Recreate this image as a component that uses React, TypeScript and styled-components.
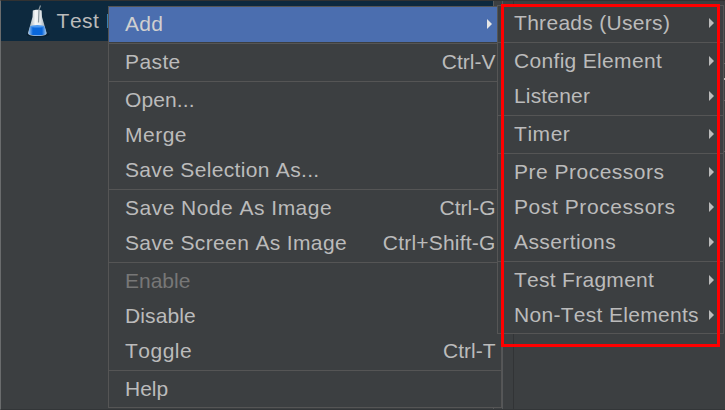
import React from "react";
import styled, { createGlobalStyle } from "styled-components";

type MenuItem = {
  label: string;
  shortcut?: string;
  submenu?: boolean;
  active?: boolean;
  disabled?: boolean;
  spacing?: number;
  shortcutSpacing?: number;
};

const contextMenu: MenuItem[][] = [
  [{ label: "Add", submenu: true, active: true, spacing: 0.3 }],
  [{ label: "Paste", shortcut: "Ctrl-V", spacing: 0.4 }],
  [
    { label: "Open...", spacing: 0.1 },
    { label: "Merge", spacing: 0.5 },
    { label: "Save Selection As...", spacing: 0.33 },
  ],
  [
    { label: "Save Node As Image", shortcut: "Ctrl-G", spacing: 0.48 },
    {
      label: "Save Screen As Image",
      shortcut: "Ctrl+Shift-G",
      spacing: 0.36,
      shortcutSpacing: 0.2,
    },
  ],
  [
    { label: "Enable", disabled: true, spacing: 0 },
    { label: "Disable", spacing: 0.1 },
    { label: "Toggle", shortcut: "Ctrl-T", spacing: 0.5 },
  ],
  [{ label: "Help", spacing: 0 }],
];

const addMenu: MenuItem[][] = [
  [{ label: "Threads (Users)", submenu: true, spacing: 0.3 }],
  [
    { label: "Config Element", submenu: true, spacing: 0.32 },
    { label: "Listener", submenu: true, spacing: 0.17 },
  ],
  [{ label: "Timer", submenu: true, spacing: 0.55 }],
  [
    { label: "Pre Processors", submenu: true, spacing: 0.5 },
    { label: "Post Processors", submenu: true, spacing: 0.58 },
    { label: "Assertions", submenu: true, spacing: 0.4 },
  ],
  [
    { label: "Test Fragment", submenu: true, spacing: 0.28 },
    { label: "Non-Test Elements", submenu: true, spacing: 0.3 },
  ],
];

const GlobalStyle = createGlobalStyle`
  * {
    box-sizing: border-box;
  }

  body {
    margin: 0;
    background: #3c3f41;
    overflow: hidden;
  }
`;

const Window = styled.div`
  position: relative;
  display: flex;
  width: 725px;
  height: 410px;
  overflow: hidden;
  background: #3c3f41;
  border-top: 1px solid #323232;
  border-bottom: 1px solid #333638;
  border-left: 1px solid #6a6c6d;
  color: #bbbbbb;
  font-family: "Liberation Sans", Arial, sans-serif;
  font-size: 21px;
  font-kerning: none;
`;

const TreePane = styled.div`
  width: 493px;
  border-right: 1px solid #555759;
`;

const TreeRow = styled.div`
  display: flex;
  align-items: center;
  gap: 6.6px;
  height: 40px;
  padding-left: 25px;
  background: #0d293e;
  letter-spacing: 0.5px;
  white-space: nowrap;
`;

const Divider = styled.div`
  width: 9px;
  border-right: 1px solid #555759;
`;

const EditorPane = styled.div`
  flex: 1;
  margin-left: 10px;
  border-left: 1px solid #323436;
`;

const EditorEdge = styled.div`
  display: flex;
  flex-direction: column;
  align-items: flex-end;
`;

const EdgeMark = styled.div<{ $gap: number; $height: number; $color: string }>`
  width: 1px;
  height: ${({ $height }) => $height}px;
  margin-top: ${({ $gap }) => $gap}px;
  background: ${({ $color }) => $color};
`;

const Menu = styled.div<{ $left: number; $top: number; $width: number }>`
  position: absolute;
  left: ${({ $left }) => $left}px;
  top: ${({ $top }) => $top}px;
  width: ${({ $width }) => $width}px;
  background: #3c3f41;
  border: 1px solid #555555;
`;

const Separator = styled.div`
  height: 3px;
  border: solid #3c3f41;
  border-width: 1px 0;
  background: #555555;
`;

const Row = styled.div<{ $active?: boolean; $disabled?: boolean }>`
  display: flex;
  align-items: center;
  justify-content: space-between;
  height: 35px;
  padding: 0 5.5px 1px 16px;
  background: ${({ $active }) => ($active ? "#4b6eaf" : "transparent")};
  color: ${({ $active, $disabled }) =>
    $active ? "#d0d0d0" : $disabled ? "#777777" : "inherit"};
  white-space: nowrap;
`;

const Label = styled.span<{ $spacing?: number }>`
  letter-spacing: ${({ $spacing }) => $spacing ?? 0}px;
`;

const Shortcut = styled.span<{ $spacing?: number }>`
  letter-spacing: ${({ $spacing }) => $spacing ?? 0}px;
`;

const Arrow = styled.span<{ $active?: boolean }>`
  margin-right: 3.5px;
  border: solid transparent;
  border-width: 5px 0 5px 5px;
  border-left-color: ${({ $active }) => ($active ? "#e6e6e6" : "#bbbbbb")};
`;

const Highlight = styled.div`
  position: absolute;
  left: 500px;
  top: 3px;
  width: 219px;
  height: 343px;
  border: 3px solid #ff0000;
`;

const FlaskIcon = () => (
  <svg width="24" height="36" viewBox="0 0 24 36">
    <defs>
      <linearGradient id="glass" x1="0" x2="1" y1="0" y2="0">
        <stop offset="0" stopColor="#8fa0ab" />
        <stop offset="0.4" stopColor="#f4f6f7" />
        <stop offset="0.65" stopColor="#e4e9ec" />
        <stop offset="1" stopColor="#8798a4" />
      </linearGradient>
      <linearGradient id="liquid" x1="0" x2="1" y1="0" y2="0">
        <stop offset="0" stopColor="#a5cbf2" />
        <stop offset="0.25" stopColor="#0967dc" />
        <stop offset="0.75" stopColor="#0967dc" />
        <stop offset="1" stopColor="#a5cbf2" />
      </linearGradient>
    </defs>
    <ellipse cx="12" cy="31.5" rx="11.5" ry="2.5" fill="#081e2f" />
    <path
      d="M6.800 7.500C9 6.500 13.500 6.500 15.700 7.500L16 14l4.700 16c.3 2-2.500 3-9.200 3S1.700 32 2 30L6.500 14z"
      fill="url(#glass)"
    />
    <path
      d="M4.200 23h14.200l2 7c.2 1.500-2.700 2.500-8.900 2.500S2.200 31.500 2.400 30z"
      fill="url(#liquid)"
    />
    <ellipse cx="11.300" cy="23.300" rx="7" ry="1.200" fill="#4c98ef" />
    <path
      d="M12.500 19.500L13 6.500 14.500 2.500"
      fill="none"
      stroke="#8c989f"
      strokeWidth="1.200"
    />
  </svg>
);

const MenuPanel: React.FC<{
  groups: MenuItem[][];
  left: number;
  top: number;
  width: number;
}> = ({ groups, left, top, width }) => (
  <Menu $left={left} $top={top} $width={width}>
    {groups.map((group, index) => (
      <React.Fragment key={index}>
        {index > 0 && <Separator />}
        {group.map((item) => (
          <Row key={item.label} $active={item.active} $disabled={item.disabled}>
            <Label $spacing={item.spacing}>{item.label}</Label>
            {item.shortcut && (
              <Shortcut $spacing={item.shortcutSpacing}>
                {item.shortcut}
              </Shortcut>
            )}
            {item.submenu && <Arrow $active={item.active} />}
          </Row>
        ))}
      </React.Fragment>
    ))}
  </Menu>
);

const App: React.FC = () => (
  <>
    <GlobalStyle />
    <Window>
      <TreePane>
        <TreeRow>
          <FlaskIcon />
          <span>Test Plan</span>
        </TreeRow>
      </TreePane>
      <Divider />
      <EditorPane>
        <EditorEdge>
          <EdgeMark $gap={62} $height={1} $color="#646464" />
          <EdgeMark $gap={14} $height={2} $color="#bbbbbb" />
          <EdgeMark $gap={20} $height={1} $color="#646464" />
          <EdgeMark $gap={50} $height={1} $color="#646464" />
        </EditorEdge>
      </EditorPane>
      <MenuPanel groups={contextMenu} left={107} top={5} width={394} />
      <MenuPanel groups={addMenu} left={496} top={4} width={227} />
      <Highlight />
    </Window>
  </>
);

export default App;
